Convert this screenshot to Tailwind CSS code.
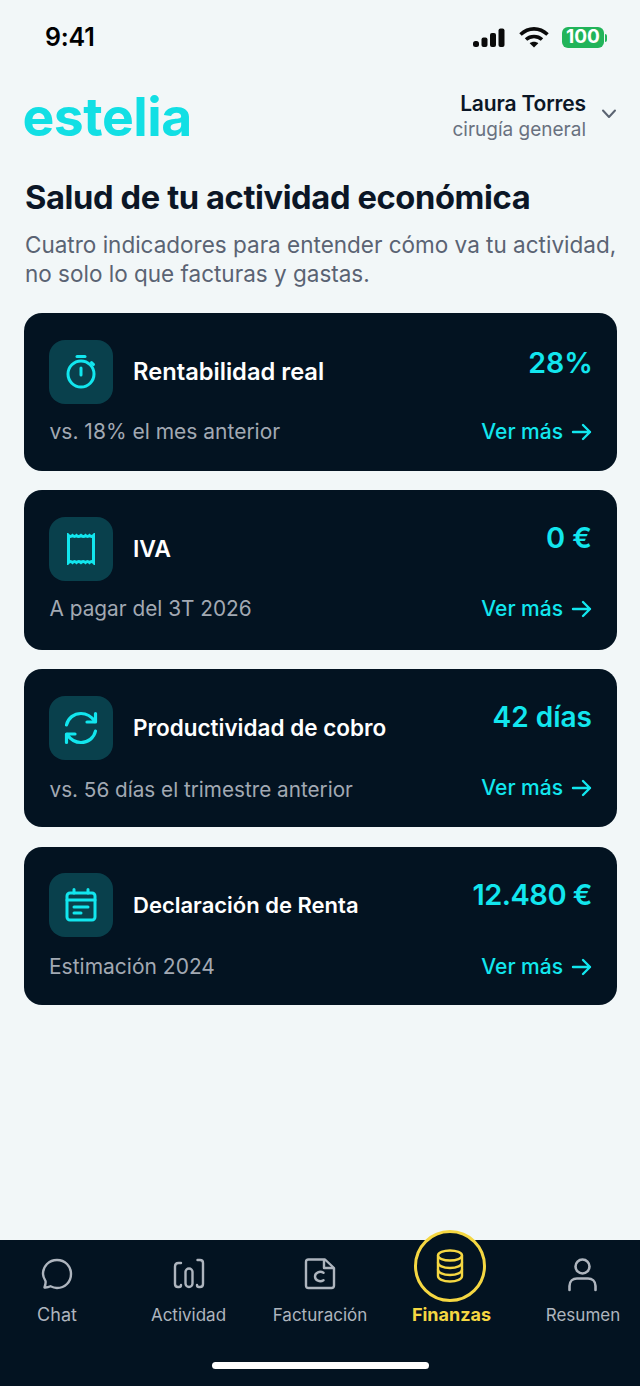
<!DOCTYPE html>
<html lang="es">
  <head>
    <meta charset="UTF-8" />
    <meta name="viewport" content="width=device-width, initial-scale=1.0" />
    <title>Estelia - Finanzas</title>
    <script src="https://cdn.jsdelivr.net/npm/@tailwindcss/browser@4"></script>
  </head>

  <body class="bg-[#f2f7f8] font-['Inter',sans-serif]">
    <div class="flex flex-col w-[640px] h-[1386px] overflow-hidden">
      <!-- status bar -->
      <div class="flex items-center justify-between h-[37px] mt-[19px] pl-[45px] pr-[33px] shrink-0">
        <span class="text-[25px] font-semibold text-black tracking-[-0.2px]">9:41</span>
        <div class="flex items-center gap-[13.5px]">
          <svg width="32" height="20" viewBox="0 0 32 20" fill="#0a0a0a">
            <rect x="0" y="13" width="6" height="6" rx="2.5" />
            <rect x="8.5" y="9.5" width="6" height="9.5" rx="2" />
            <rect x="17" y="5" width="6" height="14" rx="2" />
            <rect x="25.5" y="0.5" width="6" height="18.5" rx="2" />
          </svg>
          <svg width="30" height="21" viewBox="0 0 29 21" fill="none" stroke="#0a0a0a" stroke-width="3.6">
            <path d="M1 7.5C9 0 20 0 28 7.5" />
            <path d="M6.500 12.500C11 8.500 18 8.500 22.500 12.500" />
            <path d="M14.5 20.5L10.2 16.3C12.6 14.3 16.4 14.3 18.8 16.3Z" fill="#0a0a0a" stroke="none" />
          </svg>
          <div class="flex items-center">
            <div class="flex items-center justify-center w-[42px] h-[21px] rounded-[6px] bg-[#22b45a] text-white text-[19px] font-bold">100</div>
            <div class="w-[2px] h-[8px] ml-[1px] rounded-r-sm bg-[#22b45a]"></div>
          </div>
        </div>
      </div>

      <!-- header -->
      <div class="flex items-start justify-between mt-[34px] pl-[22.5px] pr-[23px] shrink-0">
        <span class="text-[53.5px] leading-[58px] font-bold text-[#12dfe4] tracking-[-0.5px] -mt-[2px]">estelia</span>
        <div class="flex items-center gap-[15px] mt-[1px]">
          <div class="flex flex-col items-end">
            <span class="text-[21px] leading-[26px] font-semibold text-[#0b1626] tracking-[-0.15px]">Laura Torres</span>
            <span class="text-[19px] leading-[26px] text-[#69717f]">cirugía general</span>
          </div>
          <svg class="mb-[6px]" width="16" height="12" viewBox="0 0 16 12" fill="none" stroke="#5b6472" stroke-width="2" stroke-linecap="round" stroke-linejoin="round">
            <path d="M2 2.5L8 9L14 2.5" />
          </svg>
        </div>
      </div>

      <!-- intro -->
      <div class="mt-[29px] pl-[25px] pr-[20px] shrink-0">
        <h1 class="text-[32.7px] leading-[44px] font-bold text-[#0b1626] tracking-[-0.4px]">Salud de tu actividad económica</h1>
        <p class="mt-[11px] text-[22.5px] leading-[29px] text-[#5a6373] whitespace-nowrap">Cuatro indicadores para entender cómo va tu actividad,<br />no solo lo que facturas y gastas.</p>
      </div>

      <!-- cards -->
      <div class="flex flex-col gap-[19px] mt-[25px] mx-[24px] w-[593px] shrink-0">
        <div class="flex flex-col h-[158px] rounded-[18px] bg-[#031321] pl-[25px] pr-[25px]">
          <div class="flex items-start pt-[27px]">
            <div class="flex items-center justify-center w-[64px] h-[64px] rounded-[16px] bg-[#09404c] shrink-0">
              <svg width="34" height="38" viewBox="0 0 34 38" fill="none" stroke="#12e6ee" stroke-width="3" stroke-linecap="round">
                <path d="M13 3.5H21" />
                <circle cx="17" cy="21" r="13" />
                <path d="M17 15V22" />
                <path d="M27.5 9.5L29.5 11.5" />
              </svg>
            </div>
            <span class="ml-[20px] mt-[19px] text-[23.7px] leading-[26px] font-semibold text-white">Rentabilidad real</span>
            <span class="ml-auto -mr-[1px] text-[28.5px] leading-[36px] font-semibold text-[#12e6ee] mt-[5px]">28%</span>
          </div>
          <div class="flex items-center justify-between mt-[15px]">
            <span class="ml-[0.5px] text-[21px] leading-[26px] text-[#a2a9b3]">vs. 18% el mes anterior</span>
            <span class="flex items-center gap-[8px] text-[21px] leading-[26px] font-medium text-[#12e6ee]">Ver más
              <svg width="21" height="18" viewBox="0 0 21 18" fill="none" stroke="#12e6ee" stroke-width="2.4" stroke-linecap="round" stroke-linejoin="round"><path d="M2 9H19M12 2L19 9L12 16" /></svg>
            </span>
          </div>
        </div>

        <div class="flex flex-col h-[160px] rounded-[18px] bg-[#031321] pl-[25px] pr-[25px]">
          <div class="flex items-start pt-[27px]">
            <div class="flex items-center justify-center w-[64px] h-[64px] rounded-[16px] bg-[#09404c] shrink-0">
              <svg width="32" height="32" viewBox="0 0 32 32" fill="none" stroke="#12e6ee" stroke-width="3">
                <path d="M3.5 2.5Q5.5 4.5 7.500 2.500Q9.500 4.500 11.500 2.500Q13.500 4.500 16 2.500Q18.500 4.500 20.500 2.500Q22.500 4.500 24.500 2.500Q26.500 4.500 28.500 2.500V29.500Q26.500 27.500 24.500 29.500Q22.500 27.500 20.500 29.500Q18.500 27.500 16 29.500Q13.500 27.500 11.500 29.500Q9.500 27.500 7.500 29.500Q5.500 27.500 3.500 29.500Z" />
              </svg>
            </div>
            <span class="ml-[20px] mt-[19px] text-[23px] leading-[26px] font-semibold text-white">IVA</span>
            <span class="ml-auto text-[29px] leading-[36px] font-semibold text-[#12e6ee] mt-[3px]">0 €</span>
          </div>
          <div class="flex items-center justify-between mt-[15px]">
            <span class="ml-[0.5px] text-[20.8px] leading-[26px] text-[#a2a9b3]">A pagar del 3T 2026</span>
            <span class="flex items-center gap-[8px] text-[21px] leading-[26px] font-medium text-[#12e6ee]">Ver más
              <svg width="21" height="18" viewBox="0 0 21 18" fill="none" stroke="#12e6ee" stroke-width="2.4" stroke-linecap="round" stroke-linejoin="round"><path d="M2 9H19M12 2L19 9L12 16" /></svg>
            </span>
          </div>
        </div>

        <div class="flex flex-col h-[158px] mb-[1px] rounded-[18px] bg-[#031321] pl-[25px] pr-[25px]">
          <div class="flex items-start pt-[27px]">
            <div class="flex items-center justify-center w-[64px] h-[64px] rounded-[16px] bg-[#09404c] shrink-0">
              <svg width="36" height="34" viewBox="0 0 36 34" fill="none" stroke="#12e6ee" stroke-width="3.2" stroke-linecap="round" stroke-linejoin="round">
                <path d="M3.500 14C5 7 11 2.500 18 2.500C24 2.500 28.500 5.500 32 10.500" />
                <path d="M32.500 2.500V11H24" />
                <path d="M32.500 20C31 27 25 31.500 18 31.500C12 31.500 7.500 28.500 4 23.500" />
                <path d="M3.500 31.500V23H12" />
              </svg>
            </div>
            <span class="ml-[20px] mt-[19px] text-[22.5px] leading-[26px] font-semibold text-white">Productividad de cobro</span>
            <span class="ml-auto text-[28px] leading-[36px] font-semibold text-[#12e6ee] mt-[3px]">42 días</span>
          </div>
          <div class="flex items-center justify-between mt-[13px]">
            <span class="ml-[0.5px] text-[20.7px] leading-[26px] text-[#a2a9b3] mt-[4px]">vs. 56 días el trimestre anterior</span>
            <span class="flex items-center gap-[8px] text-[21px] leading-[26px] font-medium text-[#12e6ee]">Ver más
              <svg width="21" height="18" viewBox="0 0 21 18" fill="none" stroke="#12e6ee" stroke-width="2.4" stroke-linecap="round" stroke-linejoin="round"><path d="M2 9H19M12 2L19 9L12 16" /></svg>
            </span>
          </div>
        </div>

        <div class="flex flex-col h-[158px] rounded-[18px] bg-[#031321] pl-[25px] pr-[25px]">
          <div class="flex items-start pt-[26px]">
            <div class="flex items-center justify-center w-[64px] h-[64px] rounded-[16px] bg-[#09404c] shrink-0">
              <svg width="32" height="34" viewBox="0 0 32 34" fill="none" stroke="#12e6ee" stroke-width="3" stroke-linecap="round" stroke-linejoin="round">
                <rect x="2" y="5" width="28" height="27" rx="3" />
                <path d="M2 12H30" />
                <path d="M9 1.500V5M23 1.500V5" />
                <path d="M9 19H23M9 25H16" />
              </svg>
            </div>
            <span class="ml-[20px] mt-[19px] text-[22px] leading-[26px] font-semibold text-white">Declaración de Renta</span>
            <span class="ml-auto text-[29px] leading-[36px] font-semibold text-[#12e6ee] tracking-[-0.5px] mt-[4px]">12.480 €</span>
          </div>
          <div class="flex items-center justify-between mt-[17px]">
            <span class="text-[21px] leading-[26px] text-[#a2a9b3]">Estimación 2024</span>
            <span class="flex items-center gap-[8px] text-[21px] leading-[26px] font-medium text-[#12e6ee]">Ver más
              <svg width="21" height="18" viewBox="0 0 21 18" fill="none" stroke="#12e6ee" stroke-width="2.4" stroke-linecap="round" stroke-linejoin="round"><path d="M2 9H19M12 2L19 9L12 16" /></svg>
            </span>
          </div>
        </div>
      </div>

      <!-- bottom nav -->
      <nav class="relative mt-auto h-[146px] bg-[#031321] shrink-0">
        <div class="flex justify-between">
          <div class="flex flex-col items-center w-[114px] pt-[18px]">
            <svg width="32" height="32" viewBox="0 0 32 32" fill="none" stroke="#aeb5be" stroke-width="2.4" stroke-linejoin="round">
              <path d="M3.500 29.500C3.500 29.500 5 25 4.500 23C3 20.500 2 18 2 16C2 8 8 2 16 2C24 2 30 8 30 16C30 24 24 30 16 30C13.500 30 11.500 29.300 9.500 28.300C7.500 29.300 5.500 29.700 3.500 29.500Z" />
            </svg>
            <span class="mt-[14px] text-[18px] leading-[22px] text-[#aeb5be]">Chat</span>
          </div>
          <div class="flex flex-col items-center w-[114px] pt-[18px]">
            <svg width="32" height="32" viewBox="0 0 32 32" fill="none" stroke="#aeb5be" stroke-width="2.400" stroke-linecap="round" stroke-linejoin="round">
              <path d="M8 5H5.500Q2 5 2 8.500V26Q2 29 5 29H6Q8 29 8 27" />
              <rect x="12.500" y="10.500" width="7" height="18.500" rx="3.500" />
              <path d="M24.500 2H27Q30 2 30 5V26Q30 29 27 29H26Q24 29 24 27" />
            </svg>
            <span class="mt-[14px] text-[17px] leading-[22px] text-[#aeb5be]">Actividad</span>
          </div>
          <div class="flex flex-col items-center w-[114px] pt-[18px]">
            <svg width="32" height="32" viewBox="0 0 32 32" fill="none" stroke="#aeb5be" stroke-width="2.400" stroke-linejoin="round">
              <path d="M4.500 1.500H21L30 10V27.500Q30 30 27.500 30H4.500Q2 30 2 27.500V4Q2 1.500 4.500 1.500Z" />
              <path d="M20 1.500V10H30" />
              <path d="M19.500 14.800C16 12.500 11 14.500 11 18.500C11 22.500 16 24.500 19.500 22.200" stroke-linecap="round" />
            </svg>
            <span class="mt-[14px] text-[17px] leading-[22px] text-[#aeb5be]">Facturación</span>
          </div>
          <div class="flex flex-col items-center w-[114px] pt-[18px]">
            <div class="h-[32px]"></div>
            <span class="mt-[14px] text-[18px] leading-[22px] font-bold text-[#f5d742]">Finanzas</span>
          </div>
          <div class="flex flex-col items-center w-[114px] pt-[18px]">
            <svg width="32" height="34" viewBox="0 0 32 34" fill="none" stroke="#aeb5be" stroke-width="2.600" stroke-linecap="round">
              <circle cx="15.500" cy="8.500" r="7" />
              <path d="M2.500 32V28C2.500 23 6 20.500 10 20.500H21C25 20.500 28.500 23 28.500 28V32" />
            </svg>
            <span class="mt-[12px] text-[17px] leading-[22px] text-[#aeb5be]">Resumen</span>
          </div>
        </div>

        <!-- raised active tab -->
        <div class="absolute left-[414px] -top-[10px] flex items-center justify-center w-[72px] h-[72px] rounded-full border-[3px] border-[#f5d742] bg-[#031321]">
          <svg width="28" height="34" viewBox="0 0 28 34" fill="none" stroke="#f5d742" stroke-width="2.400">
            <ellipse cx="14" cy="6.500" rx="12" ry="5" />
            <path d="M2 6.500V27C2 30 7 32.500 14 32.500C21 32.500 26 30 26 27V6.500" />
            <path d="M2 13.500C2 16.500 7 19 14 19C21 19 26 16.500 26 13.500" />
            <path d="M2 20.500C2 23.500 7 26 14 26C21 26 26 23.500 26 20.500" />
          </svg>
        </div>

        <div class="absolute left-[212px] bottom-[17px] w-[217px] h-[7px] rounded-full bg-white"></div>
      </nav>
    </div>
  </body>
</html>
